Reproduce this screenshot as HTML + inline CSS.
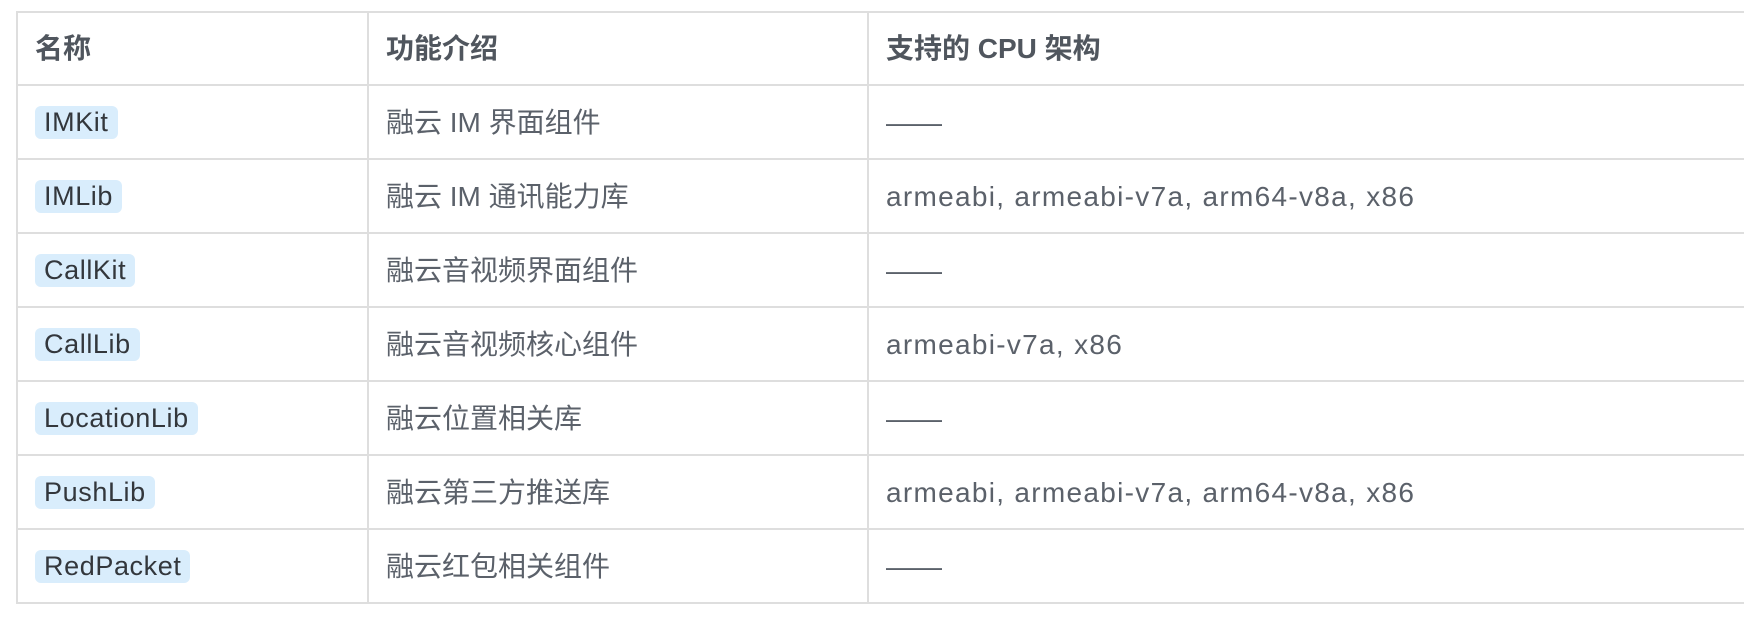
<!DOCTYPE html>
<html><head><meta charset="utf-8"><style>
html,body{margin:0;padding:0;background:#fff;width:1744px;height:630px;overflow:hidden}
table{position:absolute;left:16px;top:11px;border-collapse:collapse;width:1800px;table-layout:fixed;font-family:"Liberation Sans","Noto Sans CJK SC",sans-serif;font-size:28px;color:#5b616a}
td,th{border:2px solid #dedede;height:74px;padding:0 0 0 17px;text-align:left;vertical-align:middle;white-space:nowrap;line-height:30px;box-sizing:border-box}
tr:first-child th{height:73px}
td>span,th>span{display:inline-block;line-height:30px;height:30px;vertical-align:middle}
th{font-weight:bold;color:#50565e;font-size:28px}
col.a{width:351px}col.b{width:500px}
.l{letter-spacing:1.3px}
code{display:inline-block;font-family:"Liberation Sans",sans-serif;background:#d9edfc;color:#33373c;border-radius:6px;padding:0 9px;height:33px;line-height:33px;font-size:27px;letter-spacing:0.6px;vertical-align:middle}
</style></head><body>
<table>
<colgroup><col class="a"><col class="b"><col></colgroup>
<tr><th><span>名称</span></th><th><span>功能介绍</span></th><th><span>支持的 CPU 架构</span></th></tr>
<tr><td><code>IMKit</code></td><td><span>融云 IM 界面组件</span></td><td><span>——</span></td></tr>
<tr><td><code>IMLib</code></td><td><span>融云 IM 通讯能力库</span></td><td><span class="l">armeabi, armeabi-v7a, arm64-v8a, x86</span></td></tr>
<tr><td><code>CallKit</code></td><td><span>融云音视频界面组件</span></td><td><span>——</span></td></tr>
<tr><td><code>CallLib</code></td><td><span>融云音视频核心组件</span></td><td><span class="l">armeabi-v7a, x86</span></td></tr>
<tr><td><code>LocationLib</code></td><td><span>融云位置相关库</span></td><td><span>——</span></td></tr>
<tr><td><code>PushLib</code></td><td><span>融云第三方推送库</span></td><td><span class="l">armeabi, armeabi-v7a, arm64-v8a, x86</span></td></tr>
<tr><td><code>RedPacket</code></td><td><span>融云红包相关组件</span></td><td><span>——</span></td></tr>
</table>
</body></html>
